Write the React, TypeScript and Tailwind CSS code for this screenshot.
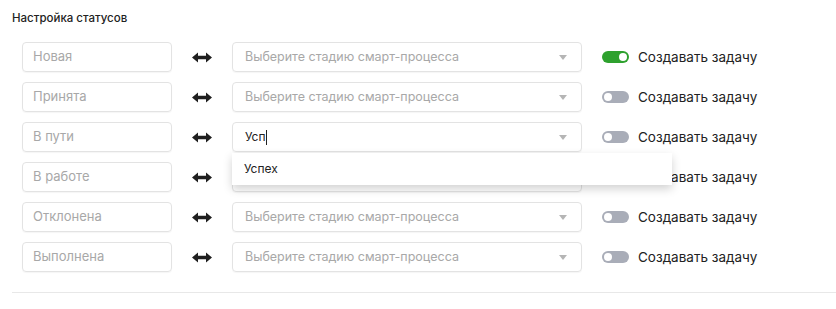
import React from "react";

const rows = [
  { name: "Новая", value: "", on: true },
  { name: "Принята", value: "", on: false },
  { name: "В пути", value: "Усп", on: false, open: true },
  { name: "В работе", value: "", on: false },
  { name: "Отклонена", value: "", on: false },
  { name: "Выполнена", value: "", on: false },
];

const Arrow = () => (
  <svg width="20" height="11" viewBox="0 0 20 11" fill="#1f1f1f">
    <path d="M0 5.5 L6 0.5 L6 3.8 L14 3.8 L14 0.5 L20 5.5 L14 10.5 L14 7.2 L6 7.2 L6 10.5 Z" />
  </svg>
);

const Toggle = ({ on }: { on: boolean }) => (
  <div
    className={
      "w-[27px] h-[12px] rounded-full flex items-center px-[2px] " +
      (on ? "bg-[#2ea12e] justify-end" : "bg-[#a9adb8] justify-start")
    }
  >
    <div className="w-[8px] h-[8px] rounded-full bg-white" />
  </div>
);

export default function App() {
  return (
    <div
      className="w-[836px] h-[309px] bg-white pl-[12px] pt-[10px] text-[#333]"
      style={{ fontFamily: "Inter, 'Noto Sans', sans-serif" }}
    >
      <div className="text-[11.5px] font-medium text-[#222] h-[16px] leading-[16px]">
        Настройка статусов
      </div>
      <div className="pl-[10px] pt-[16px] flex flex-col gap-[10px]">
        {rows.map((r, i) => (
          <div key={i} className="flex items-center h-[30px]">
            <div className="w-[150px] h-[30px] border border-[#e3e3e3] rounded-[4px] shadow-[0_1px_1px_rgba(0,0,0,0.04)] flex items-center px-[10px] text-[13px] text-[#a8a8a8]">
              {r.name}
            </div>
            <div className="w-[60px] flex justify-center">
              <Arrow />
            </div>
            <div className="relative w-[350px] h-[30px]">
              <div className="w-full h-full border border-[#e3e3e3] rounded-[4px] shadow-[0_1px_1px_rgba(0,0,0,0.04)] flex items-center pl-[12px] pr-[12px] text-[12.5px]">
                {r.value ? (
                  <span className="flex-1 text-[#222] text-[12px] flex items-center">
                    {r.value}
                    <span className="inline-block w-px h-[15px] bg-[#222]" />
                  </span>
                ) : (
                  <span className="flex-1 text-[#a8a8a8]">Выберите стадию смарт-процесса</span>
                )}
                <svg width="8" height="5" viewBox="0 0 8 5" className="mr-[2px]">
                  <path d="M0 0 L8 0 L4 5 Z" fill="#b5b5b5" />
                </svg>
              </div>
              {r.open && (
                <div className="absolute left-0 top-[31px] w-[440px] h-[32px] bg-white shadow-[0_4px_10px_rgba(0,0,0,0.18)] flex items-center pl-[12px] text-[12px] text-[#222] z-10">
                  Успех
                </div>
              )}
            </div>
            <div className="ml-[20px] flex items-center gap-[9px]">
              <Toggle on={r.on} />
              <span className="text-[13.5px] text-[#222]">Создавать задачу</span>
            </div>
          </div>
        ))}
      </div>
      <div className="mt-[20px] h-px bg-[#e8e8e8]" />
    </div>
  );
}
